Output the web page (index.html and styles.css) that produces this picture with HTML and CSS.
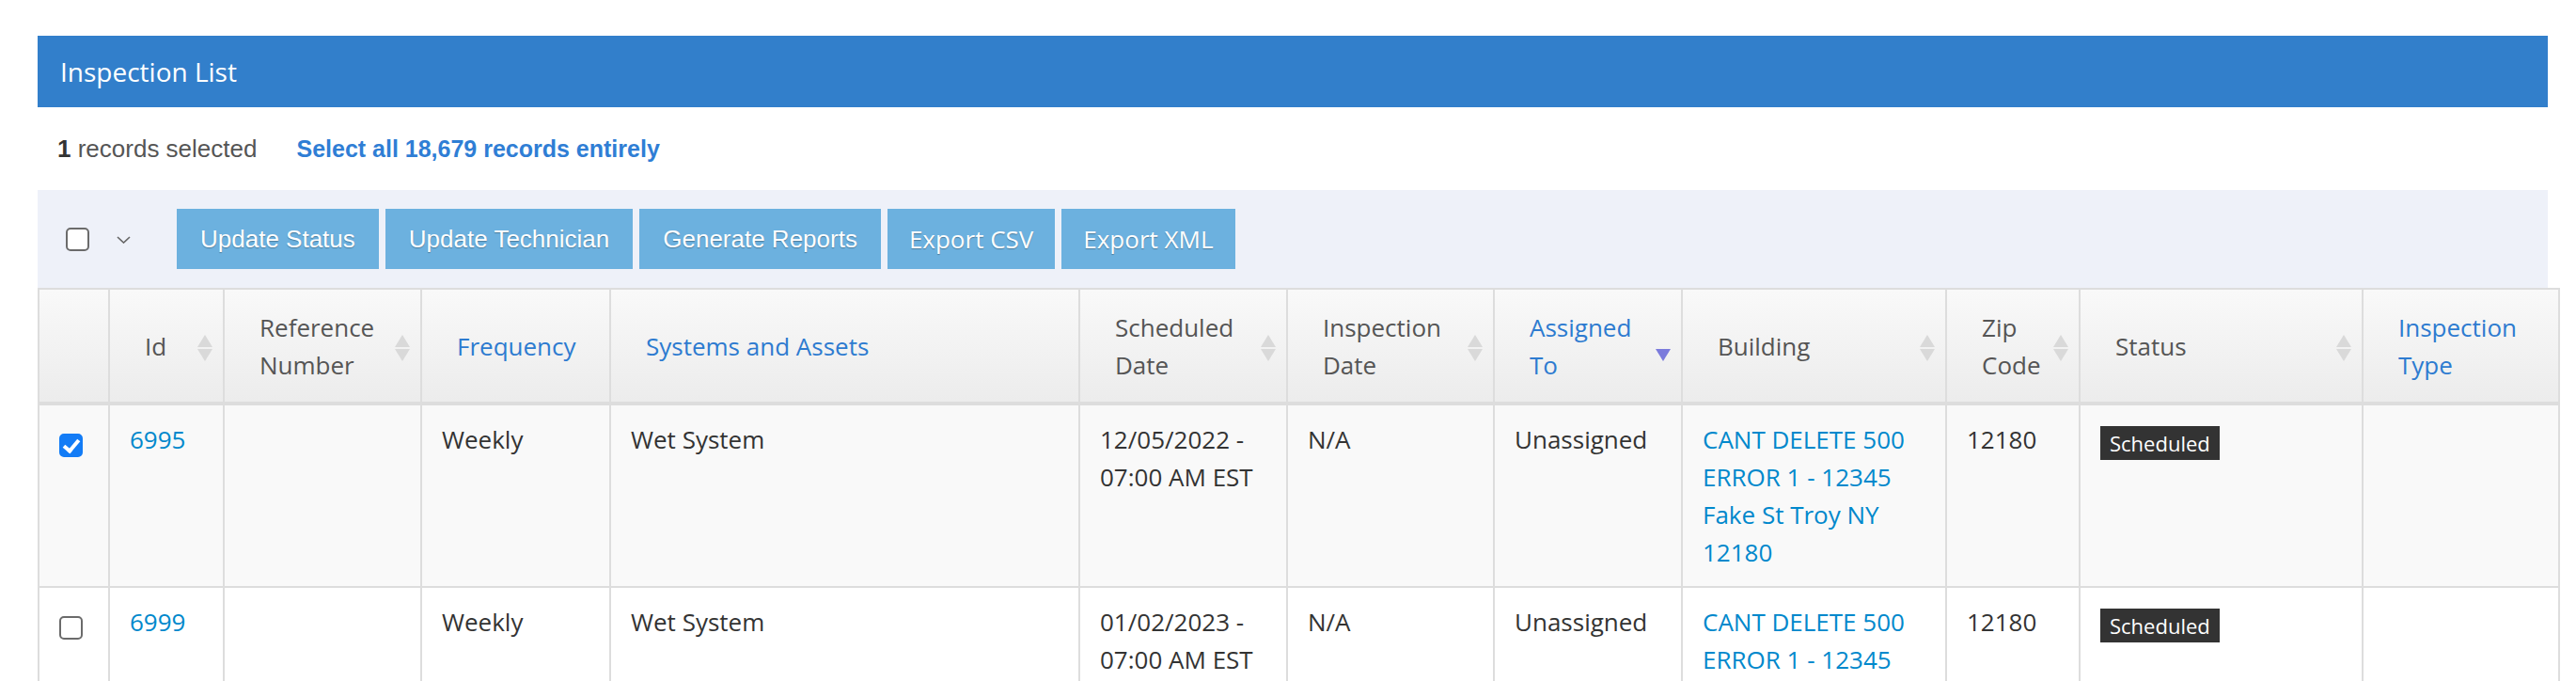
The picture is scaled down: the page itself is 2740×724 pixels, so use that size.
FILE: index.html
```html
<!DOCTYPE html>
<html>
  <head>
    <meta charset="UTF-8">
    <meta name=viewport content="width=device-width, initial-scale=1">

    <link rel="stylesheet" href="styles.css">
  </head>
  <body>
    <div id="inspections">
      <div class="panel-title">Inspection List</div>

      <div class="selection-info">
        <span class="selected-count"><b>1</b> records selected</span>
        <a href="#" class="select-all">Select all 18,679 records entirely</a>
      </div>

      <div class="bulk-actions">
        <input type="checkbox" class="check">
        <span class="bulk-caret">
          <svg width="15" height="8" viewBox="0 0 15 8"><path d="M1 1 L7.5 7 L14 1" fill="none" stroke="#666" stroke-width="1.6"/></svg>
        </span>
        <div class="actions">
          <button class="action">Update Status</button>
          <button class="action">Update Technician</button>
          <button class="action">Generate Reports</button>
          <button class="action export">Export CSV</button>
          <button class="action export">Export XML</button>
        </div>
      </div>

      <table class="grid">
        <colgroup>
          <col style="width: 75px">
          <col style="width: 122px">
          <col style="width: 210px">
          <col style="width: 201px">
          <col style="width: 499px">
          <col style="width: 221px">
          <col style="width: 220px">
          <col style="width: 200px">
          <col style="width: 281px">
          <col style="width: 142px">
          <col style="width: 301px">
          <col style="width: 209px">
        </colgroup>
        <thead>
          <tr>
            <th></th>
            <th class="sorting">Id</th>
            <th class="sorting">Reference Number</th>
            <th><a href="#">Frequency</a></th>
            <th><a href="#">Systems and Assets</a></th>
            <th class="sorting">Scheduled Date</th>
            <th class="sorting">Inspection Date</th>
            <th class="sorting-desc"><a href="#">Assigned To</a></th>
            <th class="sorting">Building</th>
            <th class="sorting">Zip Code</th>
            <th class="sorting">Status</th>
            <th><a href="#">Inspection Type</a></th>
          </tr>
        </thead>
        <tbody>
          <tr>
            <td><input type="checkbox" class="check" checked></td>
            <td><a href="#">6995</a></td>
            <td></td>
            <td>Weekly</td>
            <td>Wet System</td>
            <td>12/05/2022 - 07:00 AM EST</td>
            <td>N/A</td>
            <td>Unassigned</td>
            <td><a href="#">CANT DELETE 500 ERROR 1 - 12345 Fake St Troy NY 12180</a></td>
            <td>12180</td>
            <td><span class="label">Scheduled</span></td>
            <td></td>
          </tr>
          <tr>
            <td><input type="checkbox" class="check"></td>
            <td><a href="#">6999</a></td>
            <td></td>
            <td>Weekly</td>
            <td>Wet System</td>
            <td>01/02/2023 - 07:00 AM EST</td>
            <td>N/A</td>
            <td>Unassigned</td>
            <td><a href="#">CANT DELETE 500 ERROR 1 - 12345 Fake St Troy NY 12180</a></td>
            <td>12180</td>
            <td><span class="label">Scheduled</span></td>
            <td></td>
          </tr>
        </tbody>
      </table>
    </div>
  </body>
</html>
```

FILE: styles.css
```css
body {
  margin: 0;
  background-color: #fff;
  color: #333;
  font-family: "Open Sans", sans-serif;
}

a {
  color: #0088cc;
  text-decoration: none;
}

#inspections {
  margin: 38px 30px 0 40px;
}

.panel-title {
  background-color: #327fcb;
  color: #fff;
  font-size: 28px;
  height: 76px;
  padding: 0 24px;
  display: flex;
  align-items: center;
}

.selection-info {
  height: 88px;
  padding: 0 21px;
  display: flex;
  align-items: center;
  gap: 42px;
  font-family: "Liberation Sans", Arial, sans-serif;
  font-size: 26px;
}

.selected-count {
  color: #555;
}

.selected-count b {
  color: #333;
}

.select-all {
  color: #2f7ed5;
  font-weight: bold;
  font-size: 25px;
}

.bulk-actions {
  background-color: #eef1f9;
  padding: 20px 30px;
  display: flex;
  align-items: center;
}

.bulk-caret {
  display: flex;
  margin: 2px 49px 0 29px;
}

.actions {
  display: flex;
  gap: 7px;
}

.action {
  background-color: #6cb1df;
  border: 0;
  color: #fff;
  font-family: "Liberation Sans", Arial, sans-serif;
  font-size: 26px;
  height: 64px;
  padding: 0 25px;
  text-shadow: 0 1px 1px rgba(0, 0, 0, 0.3);
  cursor: pointer;
}

.action.export {
  font-family: "Open Sans", sans-serif;
  padding: 0 23px;
}

/* checkboxes */

.check {
  -webkit-appearance: none;
  appearance: none;
  position: relative;
  width: 25px;
  height: 25px;
  margin: 0;
  border: 2px solid #6b6b6b;
  border-radius: 5px;
  background-color: #fff;
  cursor: pointer;
}

.check:checked {
  background-color: #137cf6;
  border-color: #137cf6;
}

.check:checked::after {
  content: "";
  position: absolute;
  left: 6px;
  top: 1px;
  width: 6px;
  height: 13px;
  border: solid #fff;
  border-width: 0 4px 4px 0;
  transform: rotate(40deg);
}

/* table */

.grid {
  table-layout: fixed;
  width: 2681px;
  border-collapse: collapse;
  font-size: 26px;
  line-height: 40px;
}

.grid th,
.grid td {
  border: 2px solid #dddddd;
  text-align: left;
}

.grid th {
  position: relative;
  font-weight: normal;
  color: #555;
  padding: 20px 37px 19px 37px;
  vertical-align: middle;
  background: linear-gradient(#f9f9f9, #ececec);
  border-bottom-width: 4px;
}

.grid th a {
  color: #2d7bd0;
}

.grid th.sorting::before,
.grid th.sorting::after,
.grid th.sorting-desc::after {
  content: "";
  position: absolute;
  right: 11px;
  border-left: 8px solid transparent;
  border-right: 8px solid transparent;
}

.grid th.sorting::before {
  top: calc(50% - 12px);
  border-bottom: 13px solid #d9d9d9;
}

.grid th.sorting::after {
  top: calc(50% + 3px);
  border-top: 13px solid #d9d9d9;
}

.grid th.sorting-desc::after {
  top: calc(50% + 3px);
  border-top: 13px solid #7b7bdc;
}

.grid td {
  padding: 16px 21px;
  vertical-align: top;
}

.grid tbody tr:nth-child(odd) {
  background-color: #f9f9f9;
}

.grid td .check {
  display: block;
  margin-top: 14px;
}

.label {
  display: inline-block;
  vertical-align: top;
  margin-top: 6px;
  padding: 2px 10px;
  background-color: #333;
  color: #fff;
  font-size: 22px;
  line-height: 32px;
}
```
